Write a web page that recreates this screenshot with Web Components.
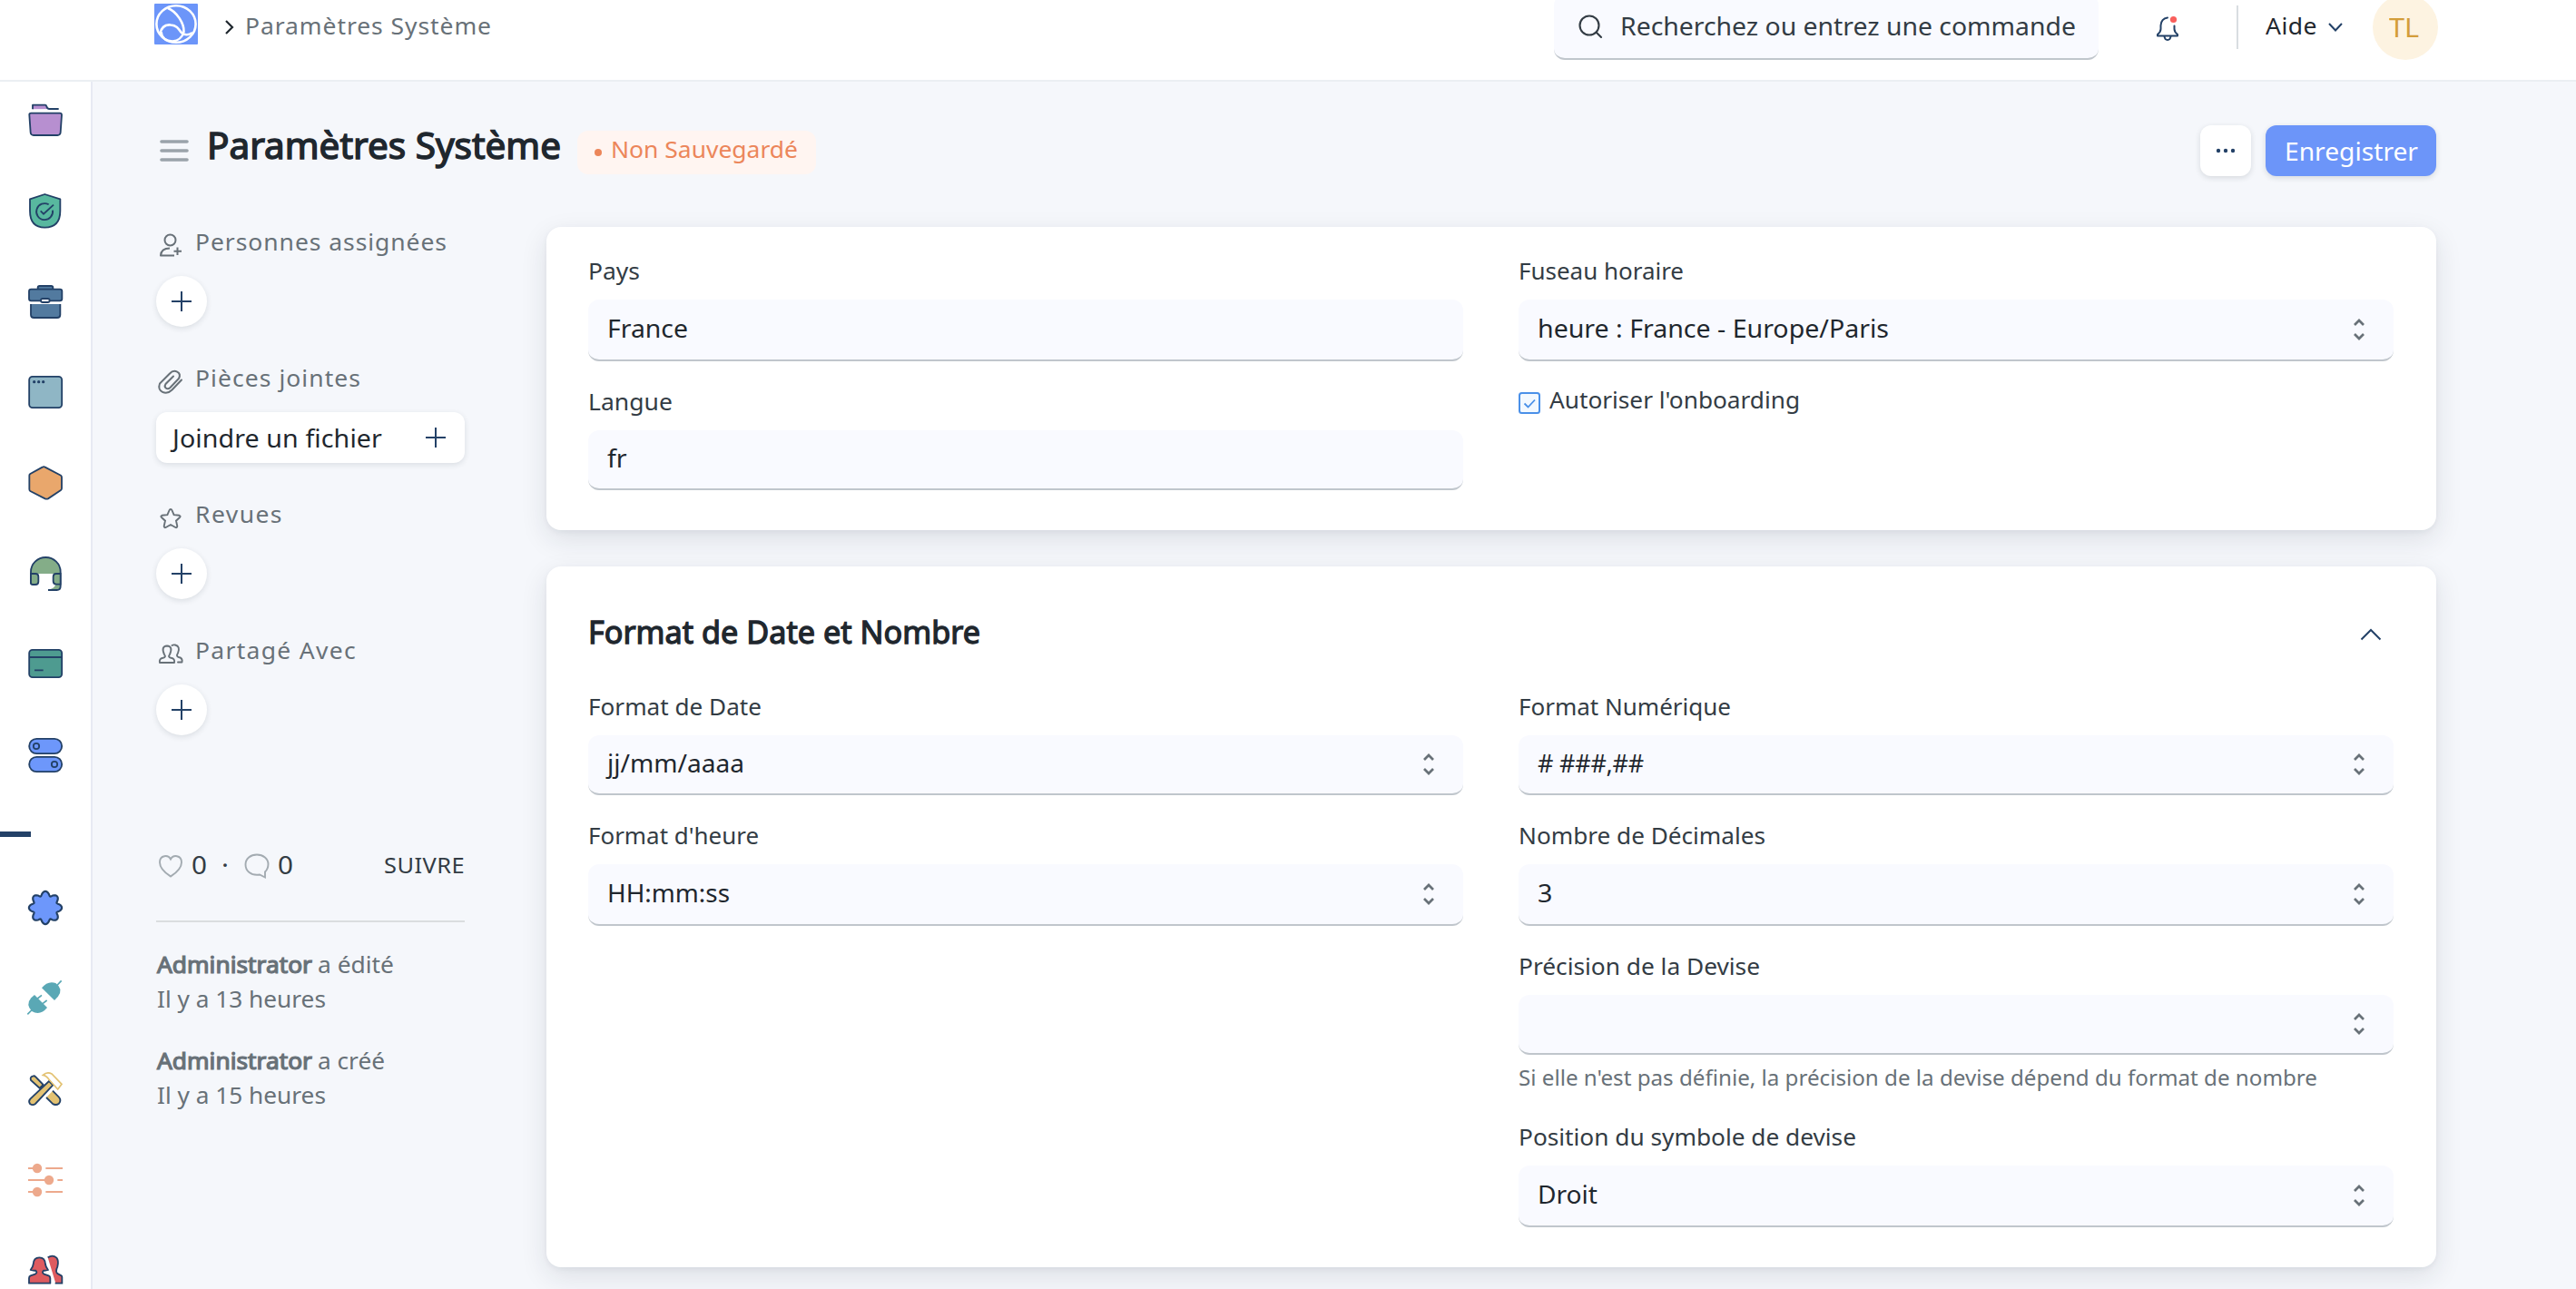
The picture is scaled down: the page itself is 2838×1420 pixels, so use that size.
<!DOCTYPE html>
<html lang="fr">
<head>
<meta charset="utf-8">
<title>Paramètres Système</title>
<style>
html,body{margin:0;height:100%}
body{height:1420px;overflow:hidden;background:#f5f7fb;font-family:"Noto Sans","Open Sans",sans-serif;font-size:25px;color:#333c44}
</style>
</head>
<body>
<desk-app></desk-app>
<script>
// Outline of the settings wheel: eight rounded lobes round (150,120).
const wheel = Array.from({length:160}, (_, i) => {
  const t = i * Math.PI / 80, a = t + .035 * Math.sin(8 * t), r = 47.5 + 6.8 * Math.cos(8 * t);
  return (150 + r * Math.sin(a)).toFixed(1) + ' ' + (120 - r * Math.cos(a)).toFixed(1);
}).join('L');
const ICONS = {
  folder:['90 66 120 120','<g stroke="#234167" stroke-width="5.5" fill="#b78fd0"><path d="M108 91V77H149Q153 77 154 82Q156 90 163 90H194" stroke-linejoin="round"/><path d="M103 104H198Q204 104 204 110L200 168Q199 177 190 177H111Q102 177 101 168L97 110Q96 104 103 104Z"/></g>'],
  shield:['90 366 120 120','<path d="M148 372L199 388V427Q199 482 148 482Q99 482 99 427V388Z" fill="#58b89f" stroke="#234167" stroke-width="5.5" stroke-linejoin="round"/><g fill="none" stroke="#234167" stroke-width="5.5"><path d="M161 406A27 27 0 1 0 174 425"/><path d="M134 427L144 437L177 407"/></g>'],
  briefcase:['90 666 120 120','<g fill="#527a9f" stroke="#234167" stroke-width="5.5"><path d="M125 686V680Q125 675 131 675H169Q175 675 175 680V686"/><rect x="96" y="686" width="109" height="38" rx="7"/><path d="M102 735V770Q102 780 112 780H189Q199 780 199 770V735"/><rect x="135" y="717" width="29" height="12" rx="6" fill="#fff"/></g>'],
  window:['90 966 120 120','<rect x="96.500" y="974.500" width="108" height="103" rx="11" fill="#8fb6c5" stroke="#234167" stroke-width="5.5"/><g fill="#234167"><circle cx="113" cy="992" r="5"/><circle cx="128" cy="992" r="5"/><circle cx="143" cy="992" r="5"/></g>'],
  hexagon:['90 36 120 120','<path d="M149 44L201 71Q204 73 204 77V114Q204 118 201 120L159 148Q154 150 149 148L100 123Q97 121 97 117V71Q97 68 100 66L140 44Q145 41 149 44Z" fill="#e9a76c" stroke="#234167" stroke-width="5.5"/>'],
  headset:['90 336 120 120','<path d="M102 396V390A49 48 0 0 1 200 390V396Z" fill="#84ad88"/><path d="M159 449Q181 446 184 430L200 432V438Q200 449 190 449Z" fill="#84ad88"/><g stroke="#234167" stroke-width="5.500" fill="none"><path d="M102 430V390A49 48 0 0 1 200 390V438Q200 450 188 450H159"/><path d="M102 396H117Q127 396 127 406V422Q127 432 117 432H108Q102 432 102 425ZM200 396H186Q176 396 176 406V421Q176 431 186 431H200Z" fill="#84ad88"/></g>'],
  card:['90 636 120 120','<rect x="96.500" y="647.500" width="108" height="91" rx="11" fill="#4e9b90" stroke="#234167" stroke-width="5.5"/><path d="M97 672H204M114 715H143" stroke="#234167" stroke-width="5.500"/>'],
  toggles:['90 936 120 120','<g fill="#6d97fb" stroke="#234167" stroke-width="5.5"><rect x="96.500" y="941.500" width="108" height="49" rx="24.500"/><rect x="96.500" y="1001.500" width="108" height="49" rx="24.500"/><circle cx="120" cy="966" r="9.500"/><circle cx="180" cy="1026" r="9.500"/></g>'],
  cog:['90 60 120 120',`<path d="M${wheel}Z" fill="#6d97fb" stroke="#234167" stroke-width="6.500"/>`],
  plug:['90 360 120 120','<g fill="#5aa8b5" stroke="#5aa8b5"><path d="M138 385Q158 360 184 369Q210 388 192 413L180 426Z" stroke="none"/><path d="M114 408L156 450Q133 478 105 462Q84 440 103 418Z" stroke="none"/><path d="M187 378L203 361M91 472L107 456M124 420L138 409M141 437L155 426" stroke-width="5" fill="none"/></g>'],
  tools:['90 660 120 120','<path d="M102 690Q98 678 110 676Q114 675 118 679L143 705L131 716Z" fill="#e3c272" stroke="#234167" stroke-width="5.500"/><path d="M174 725L194 745Q204 756 195 767Q184 775 173 767L153 747Z" fill="#e3c272"/><path d="M174 725L194 745Q204 756 195 767Q184 775 173 767L153 747" fill="none" stroke="#234167" stroke-width="5.500"/><path d="M162 693L175 706L117 768Q108 775 99 768Q93 759 100 752Z" fill="#e3c272" stroke="#234167" stroke-width="5.500"/><path d="M142 673Q156 660 171 669L204 703L191 720L162 688Q154 675 142 673Z" fill="#fff" stroke="#e3c272" stroke-width="5"/>'],
  sliders:['90 960 120 120','<g stroke="#eda98c" stroke-width="5.500"><path d="M93 981H123M151 981H207M93 1020H162M190 1020H207M93 1059H123M151 1059H207"/></g><g fill="#eda98c"><circle cx="123" cy="981" r="15.500"/><circle cx="162" cy="1020" r="15.500"/><circle cx="123" cy="1059" r="15.500"/></g>'],
  people:['90 1260 120 120','<g fill="#de5b5f"><path d="M158 1276Q174 1265 187 1277Q195 1287 190 1306Q181 1325 192 1330L205 1337V1361H184Z"/><path d="M158 1276Q174 1265 187 1277Q195 1287 190 1306Q181 1325 192 1330L203 1336Q205 1337 205 1341V1361H182" fill="none" stroke="#234167" stroke-width="5.500"/><path d="M101 1317Q109 1308 110 1298Q111 1276 130 1276Q149 1276 150 1298Q151 1308 159 1317Q150 1320 144 1319Q137 1326 146 1331L161 1336Q166 1338 166 1344V1361H96V1344Q96 1338 101 1336L116 1331Q125 1326 118 1319Q110 1320 101 1317Z" stroke="#234167" stroke-width="5.500" stroke-linejoin="round"/></g>'],
  logo:['0 0 48 45','<rect width="48" height="45" rx="1" fill="#6c95f9"/><g fill="none" stroke="#fff" stroke-width="2.600"><ellipse cx="24" cy="22.500" rx="21.600" ry="20.300"/><path d="M15 5C25 9 33 22 32.500 31C31 37 26 41 20 41.500C12 41 8 37 7.500 31"/><path d="M6.500 33C8 25 13 23 18 23.500C25 24 27 28 29.500 31.500C33 35 38 35 42 32"/></g>'],
  next:['0 0 12 18','<path d="M2 2L9 9L2 16" fill="none" stroke="#1f272e" stroke-width="2.200"/>'],
  search:['0 0 28 28','<g fill="none" stroke="#333c44" stroke-width="2.100"><circle cx="13" cy="13" r="10.500"/><path d="M20.500 20.500L26 26" stroke-linecap="round"/></g>'],
  bell:['0 0 28 30','<g fill="none" stroke="#234167" stroke-width="2" stroke-linecap="round" stroke-linejoin="round"><path d="M14 4.500Q7 5.500 6.500 13V17Q6.500 20 3 23V24.500H25V23Q21.500 20 21.500 17V13.500"/><path d="M10.500 25Q11 29 14 29Q17 29 17.500 25"/></g><circle cx="20.500" cy="6.500" r="3.600" fill="#f95f5c"/>'],
  down:['0 0 18 12','<path d="M2 2L9 9.500L16 2" fill="none" stroke="#234167" stroke-width="2"/>'],
  up:['0 0 24 14','<path d="M1.500 12.500L12 2L22.500 12.500" fill="none" stroke="#234167" stroke-width="2"/>'],
  menu:['0 0 32 24','<path d="M2 2H30M2 12H30M2 22H30" stroke="#9aa3aa" stroke-width="3.600" stroke-linecap="round"/>'],
  dots:['0 0 24 8','<g fill="#234167"><circle cx="4" cy="4" r="2.200"/><circle cx="12" cy="4" r="2.200"/><circle cx="20" cy="4" r="2.200"/></g>'],
  plus:['0 0 22 22','<path d="M11 0V22M0 11H22" stroke="#234167" stroke-width="2"/>'],
  updown:['0 0 14 26','<path d="M2 8L7 3L12 8M2 18L7 23L12 18" fill="none" stroke="#687178" stroke-width="2.700"/>'],
  check:['0 0 24 24','<rect x="1" y="1" width="22" height="22" rx="2.500" fill="#f3f9ff" stroke="#4a90e8" stroke-width="2"/><path d="M6.500 12.500L10.500 16.500L18 8.500" fill="none" stroke="#4a90e8" stroke-width="1.800"/>'],
  assign:['0 0 26 28','<g fill="none" stroke="#687178" stroke-width="2"><circle cx="12.500" cy="7.500" r="6"/><path d="M12 16.500Q2.500 16.500 2 24.500H17M20.500 15.500V24M16.500 19.700H25" stroke-linejoin="round"/></g>'],
  clip:['0 0 28 28','<path d="M26 11.500L15.500 22.500C9 29 -1.500 24.500 2 15.500L13 4.500C18 -1 26.500 3 23 10L13.500 20C10 23 6 19.500 8.500 16L17 7.500" fill="none" stroke="#687178" stroke-width="2" stroke-linecap="round"/>'],
  star:['0 0 24 24','<path d="M12 2Q13 2 13.400 3L15.600 8.200L21.500 8.800Q23.500 9.500 22 11L18 14.700L19.300 20.600Q19 22.800 17.300 22L12 19L6.700 22Q5 22.800 4.700 20.600L6 14.700L2 11Q.5 9.500 2.500 8.800L8.400 8.200L10.600 3Q11 2 12 2Z" fill="none" stroke="#687178" stroke-width="1.900"/>'],
  share:['0 0 28 24','<g fill="none" stroke="#687178" stroke-width="1.900" stroke-linejoin="round" stroke-linecap="round"><path d="M2 21Q1 16.500 5.500 15.800Q9.500 15 7 12Q3 3 10 2.500Q17 3 13 12Q10.500 15 14.500 15.800Q19 16.500 18 21Z"/><path d="M15.500 2Q17 1 19 1.500Q25 3 22 10.500Q19.500 14 23 15Q27.500 16 26.500 20.500H22"/></g>'],
  heart:['0 0 28 26','<path d="M14 5.500C11.500 .5 2 .5 2 9C2 17 11 22.500 14 24.500C17 22.500 26 17 26 9C26 .5 16.500 .5 14 5.500Z" fill="none" stroke="#a3abb1" stroke-width="1.900"/>'],
  comment:['0 0 28 28','<path d="M14 1.500C21 1.500 26.500 6 26.500 12C26.500 16 24.500 19 23 20.500V26.500L17 23.500C7 25 1.500 19 1.500 12.500C1.500 6 7 1.500 14 1.500Z" fill="none" stroke="#a3abb1" stroke-width="1.900"/>'],
};
const define = (name, css, html, after) => customElements.define(name, class extends HTMLElement {
  connectedCallback() {
    if (this.shadowRoot) return;
    const r = this.attachShadow({mode:'open'});
    r.innerHTML = `<style>${css}</style>${typeof html === 'function' ? html(this) : html}`;
    if (after) after(this);
  }
});

define('desk-app', ':host{display:flex;flex-direction:column;height:1420px}.row{display:flex;flex:1;min-height:0}',
  '<desk-header></desk-header><div class="row"><desk-nav></desk-nav><settings-page></settings-page></div>');

define('desk-header', `
:host{display:block;flex:none;height:88px;border-bottom:2px solid #ebeff3;background:#fff}
.bar{display:flex;align-items:center;height:72px;margin-top:-6px;padding:0 152px 0 170px}
ui-icon{flex:none}
.crumb{color:#687178;margin-left:11px;padding-bottom:4px}
.search{box-sizing:border-box;display:flex;align-items:center;width:600px;height:72px;margin-left:auto;padding-left:26px;background:#f9faff;border-bottom:2px solid #c0c6cc;border-radius:12px;font-size:27px}
.search ui-text{margin-left:19px;padding-bottom:2px}
.sep{width:2px;height:48px;background:#d9dde1;margin:0 30px 0 62px}
.help{color:#1f272e;padding-bottom:4px}
.avatar{display:flex;align-items:center;justify-content:center;width:72px;height:72px;border-radius:50%;background:#fdf3e1;color:#d39d39;font-size:29px;margin-left:32px}
.avatar ui-text{padding-bottom:2px}
`, `<div class="bar"><ui-icon n="logo" w="48" h="45" style="margin-top:-7px"></ui-icon>
<ui-icon n="next" w="12" h="18" style="margin-left:29px"></ui-icon>
<ui-text class="crumb" w="272">Paramètres Système</ui-text>
<div class="search"><ui-icon n="search" w="28" h="28"></ui-icon><ui-text w="502">Recherchez ou entrez une commande</ui-text></div>
<ui-icon n="bell" w="28" h="30" style="margin-left:62px"></ui-icon><div class="sep"></div>
<ui-text class="help" w="57">Aide</ui-text><ui-icon n="down" w="18" h="12" style="margin-left:11px"></ui-icon>
<div class="avatar"><ui-text w="36">TL</ui-text></div></div>`);

define('desk-nav', `
:host{display:flex;flex-direction:column;box-sizing:border-box;flex:none;width:102px;padding-top:22px;background:#fff;border-right:2px solid #e7eaf3;overflow:hidden}
ui-icon{flex:none;margin:0 0 60px 30px}
.mark{flex:none;width:34px;height:6px;background:#234167;margin:4px 0 58px}
`, () => {
  const i = n => `<ui-icon n="${n}" w="40" h="40"></ui-icon>`;
  return ['folder','shield','briefcase','window','hexagon','headset','card','toggles'].map(i).join('') +
    '<div class="mark"></div>' + ['cog','plug','tools','sliders','people'].map(i).join('');
});

define('settings-page', `
:host{display:block;flex:1;padding:48px 154px 0 70px}
.cols{display:flex;gap:90px;margin-top:56px}
.cards{flex:1;display:flex;flex-direction:column;gap:40px}
`, `<page-title></page-title><div class="cols"><form-sidebar></form-sidebar><div class="cards">
<form-card><div slot="left"><form-field label="Pays" lw="57" value="France" vw="89" h="68"></form-field>
<form-field label="Langue" lw="93" value="fr" vw="22" h="66"></form-field></div>
<div slot="right"><form-field select label="Fuseau horaire" lw="182" value="heure : France - Europe/Paris" vw="387" h="68"></form-field>
<form-check w="276">Autoriser l'onboarding</form-check></div></form-card>
<form-card heading="Format de Date et Nombre"><div slot="left"><form-field select label="Format de Date" lw="191" value="jj/mm/aaaa" vw="151" h="66"></form-field>
<form-field select label="Format d'heure" lw="188" value="HH:mm:ss" vw="135" h="68"></form-field></div>
<div slot="right"><form-field select label="Format Numérique" lw="234" value="# ###,##" vw="117" h="66"></form-field>
<form-field select label="Nombre de Décimales" lw="272" value="3" vw="17" h="68"></form-field>
<form-field select label="Précision de la Devise" lw="266" value="" h="66" help="Si elle n'est pas définie, la précision de la devise dépend du format de nombre" hw="880"></form-field>
<form-field select label="Position du symbole de devise" lw="372" value="Droit" vw="66" h="68"></form-field></div></form-card>
</div></div>`);

define('page-title', `
:host{display:flex;align-items:center;height:56px}
.t{font-size:40px;color:#1f272e;-webkit-text-stroke:1.500px #1f272e;margin-left:20px;padding-bottom:13px}
.badge{display:flex;align-items:center;box-sizing:border-box;height:48px;width:263px;margin:4px 0 0 18px;padding-left:19px;border-radius:12px;background:#fff5f1;color:#ec865a}
.badge ui-text{padding-bottom:8px}
.dot{width:8px;height:8px;border-radius:50%;background:#ec865a;margin-right:10px;margin-top:0}
.b{display:flex;align-items:center;justify-content:center;height:56px;border-radius:12px;box-shadow:0 2px 6px rgba(25,39,52,.14)}
.more{width:56px;background:#fff;margin-left:auto}
.save{width:188px;background:#6c95f9;color:#fff;font-size:27px;margin-left:16px}
`, `<ui-icon n="menu" w="32" h="24" style="margin-left:4px"></ui-icon><ui-text class="t" w="390">Paramètres Système</ui-text>
<div class="badge"><span class="dot"></span><ui-text w="206">Non Sauvegardé</ui-text></div>
<div class="b more"><ui-icon n="dots" w="24" h="8"></ui-icon></div><div class="b save"><ui-text w="147">Enregistrer</ui-text></div>`);

define('form-sidebar', `
:host{display:block;flex:none;width:340px;color:#687178}
.stats{display:flex;align-items:center;height:40px;margin-top:122px;color:#333c44;font-size:28px}
.follow{margin-left:auto;font-size:24px}
hr{border:0;height:2px;background:#dadddf;margin:42px 0 27px}
p{margin:0 0 30px;padding-left:1px;line-height:38px;white-space:nowrap}
b{font-weight:400;-webkit-text-stroke:1.200px #687178}
`, `<side-section icon="assign" iw="26" ih="28" label="Personnes assignées" lw="278"><add-button></add-button></side-section>
<side-section icon="clip" iw="28" ih="28" label="Pièces jointes" lw="183"><add-button label="Joindre un fichier" lw="231"></add-button></side-section>
<side-section icon="star" iw="24" ih="24" label="Revues" lw="97"><add-button></add-button></side-section>
<side-section icon="share" iw="28" ih="24" label="Partagé Avec" lw="178"><add-button></add-button></side-section>
<div class="stats"><ui-icon n="heart" w="28" h="26" style="margin:3px 0 0 2px"></ui-icon><ui-text w="18" style="margin-left:9px">0</ui-text><ui-text w="8" style="margin-left:15px">·</ui-text><ui-icon n="comment" w="28" h="28" style="margin:3px 0 0 17px"></ui-icon><ui-text w="18" style="margin-left:9px">0</ui-text><ui-text class="follow" w="89">SUIVRE</ui-text></div>
<hr><p><b><ui-text w="171">Administrator</ui-text></b><ui-text w="84" style="margin-left:6px">a édité</ui-text><br><ui-text w="186">Il y a 13 heures</ui-text></p>
<p><b><ui-text w="171">Administrator</ui-text></b><ui-text w="74" style="margin-left:6px">a créé</ui-text><br><ui-text w="186">Il y a 15 heures</ui-text></p>`);

define('side-section', `
:host{display:block;margin-bottom:40px}
.l{display:flex;align-items:center;height:32px;margin-bottom:22px}
.i{width:42px;display:flex;justify-content:center;flex:none;margin:9px 6px 0 -5px}
`, e => `<div class="l"><span class="i"><ui-icon n="${e.getAttribute('icon')}" w="${e.getAttribute('iw')}" h="${e.getAttribute('ih')}"></ui-icon></span><ui-text w="${e.getAttribute('lw')}">${e.getAttribute('label')}</ui-text></div><slot></slot>`);

define('add-button', `
:host{display:flex;align-items:center;justify-content:center;width:56px;height:56px;border-radius:50%;background:#fff;box-shadow:0 2px 6px rgba(25,39,52,.12);font-size:27px;color:#1f272e}
:host([label]){box-sizing:border-box;width:340px;border-radius:12px;justify-content:space-between;padding:0 21px 0 18px}
`, e => (e.hasAttribute('label') ? `<ui-text w="${e.getAttribute('lw')}">${e.getAttribute('label')}</ui-text>` : '') + '<ui-icon n="plus" w="22" h="22"></ui-icon>');

define('form-card', `
:host{display:block;background:#fff;border-radius:16px;padding:32px 47px 44px 46px;box-shadow:0 2px 6px rgba(25,39,52,.05),0 10px 30px rgba(25,39,52,.11)}
:host([heading]){padding-top:0}
.head{display:flex;align-items:center;justify-content:space-between;height:138px;padding-right:13px}
.head ui-text{font-size:34px;color:#1f272e;-webkit-text-stroke:1.300px #1f272e;padding-top:6px}
.head ui-icon{margin-top:11px}
.g{display:grid;grid-template-columns:964px 964px;column-gap:61px}
::slotted(div){display:flex;flex-direction:column;gap:28px}
`, e => (e.hasAttribute('heading') ? `<div class="head"><ui-text w="432">${e.getAttribute('heading')}</ui-text><ui-icon n="up" w="24" h="14"></ui-icon></div>` : '') +
  '<div class="g"><slot name="left"></slot><slot name="right"></slot></div>');

define('form-field', `
:host{display:block}
.l{display:flex;height:32px;line-height:32px;margin-bottom:16px}
.v{display:flex;align-items:center;justify-content:space-between;box-sizing:border-box;background:#f9faff;border-bottom:2px solid #c0c6cc;border-radius:12px;padding:0 31px 0 21px;color:#1f272e;font-size:27px}
.v ui-text{padding-bottom:3px}
.h{display:flex;height:37px;line-height:32px;margin-top:9px;font-size:24px;color:#687178}
`, e => { const a = n => e.getAttribute(n) || '';
  return `<div class="l"><ui-text w="${a('lw')}">${a('label')}</ui-text></div><div class="v" style="height:${a('h')}px"><ui-text w="${a('vw')}">${a('value')}</ui-text>${e.hasAttribute('select') ? '<ui-icon n="updown" w="14" h="26"></ui-icon>' : ''}</div>` +
    (a('help') ? `<div class="h"><ui-text w="${a('hw')}">${a('help')}</ui-text></div>` : ''); });

define('form-check', ':host{display:flex;align-items:flex-start;line-height:32px}ui-icon{margin-top:6px}ui-text{margin:-2px 0 0 10px}',
  e => `<ui-icon n="check" w="24" h="24"></ui-icon><ui-text w="${e.getAttribute('w')}">${e.textContent}</ui-text>`);

define('ui-icon', ':host{display:block}svg{display:block;overflow:visible}', e => {
  const [box, body] = ICONS[e.getAttribute('n')];
  return `<svg width="${e.getAttribute('w')}" height="${e.getAttribute('h')}" viewBox="${box}" preserveAspectRatio="none">${body}</svg>`;
});

// Widens its letters (by 6% at most), then tracks them, so that the line takes the width given in "w".
define('ui-text', ':host{display:inline-block;white-space:nowrap;flex:none;font-variant-ligatures:none}span{display:inline-block;transform-origin:0 50%}', '<span><slot></slot></span>', e => {
  const w = +e.getAttribute('w'), n = e.textContent.length;
  if (!w || !n) return;
  const s = e.shadowRoot.querySelector('span');
  const now = s.getBoundingClientRect().width;
  const k = Math.min(1.06, Math.max(1, w / now));
  if (n > 2) s.style.letterSpacing = ((w / k - now) / n).toFixed(3) + 'px';
  if (k > 1) s.style.transform = `scaleX(${k.toFixed(4)})`;
  e.style.width = w + 'px';
});
</script>
</body>
</html>
